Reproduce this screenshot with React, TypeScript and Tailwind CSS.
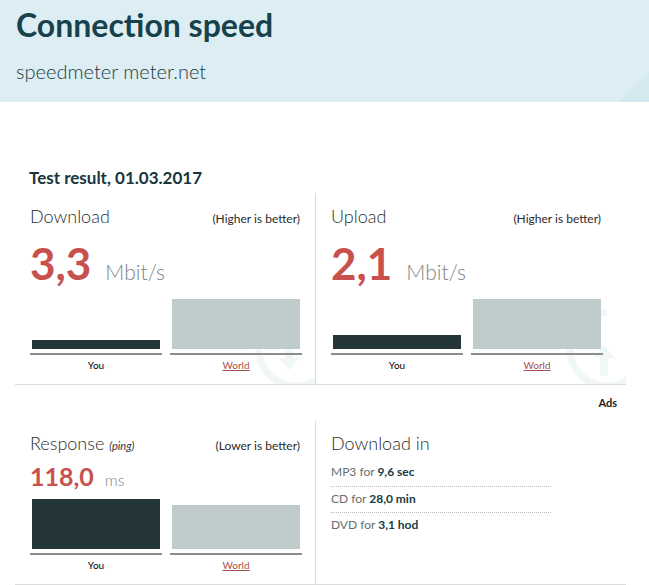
import React from 'react'

const FONT = { fontFamily: 'Lato, "Noto Sans", sans-serif' }

type BarsProps = { you: number; world: number }

// two bars over a grey base line, heights are 0..50 px
function Bars({ you, world }: BarsProps) {
  return (
    <div className="grid grid-cols-[132px_132px] gap-x-[8px]">
      <div>
        <div className="flex h-[50px] items-end px-[2px]">
          <div className="w-full bg-[#243538]" style={{ height: you }} />
        </div>
        <div className="mt-[4px] h-[2px] bg-[#8c8c8c]" />
        <div className="mt-[3px] text-center text-[10px] leading-[14px] text-black">You</div>
      </div>
      <div>
        <div className="flex h-[50px] items-end px-[2px]">
          <div className="w-full bg-[#c0cbcb]" style={{ height: world }} />
        </div>
        <div className="mt-[4px] h-[2px] bg-[#8c8c8c]" />
        <div className="mt-[3px] text-center text-[10px] leading-[14px] text-[#a4504d] underline">World</div>
      </div>
    </div>
  )
}

function Watermark({ up }: { up?: boolean }) {
  return (
    <svg className="pointer-events-none absolute bottom-[-10px] right-[-26px]" width="90" height="90" viewBox="0 0 90 90">
      <path d="M45 8 A37 37 0 1 0 82 45" fill="none" stroke="#f1f6f7" strokeWidth="7" />
      {up ? (
        <path d="M38 72 L38 54 L31 54 L42 41 L53 54 L46 54 L46 72 Z" fill="#f1f6f7" />
      ) : (
        <path d="M34 40 L42 40 L42 54 L49 54 L38 66 L27 54 L34 54 Z" fill="#f1f6f7" />
      )}
    </svg>
  )
}

function SpeedCell({ title, note, value, unit, you, world, up, last }: {
  title: string; note: string; value: string; unit: string; you: number; world: number; up?: boolean; last?: boolean
}) {
  return (
    <div className={'relative overflow-hidden pl-[15px] pt-[11px] pb-[12px] ' + (last ? 'flex-1' : 'w-[301px] border-r border-[#dcdcdc]')}>
      <Watermark up={up} />
      <div className="relative w-[272px]">
        <div className="flex items-baseline justify-between pr-[2px]">
          <span className="text-[18px] font-light leading-[24px] text-[#1f2e31]">{title}</span>
          <span className="text-[12px] leading-[18px] text-[#2a2a2a]">{note}</span>
        </div>
        <div className="mt-[11px] flex items-baseline">
          <span className="text-[44px] font-bold leading-[48px] text-[#c8504d]">{value}</span>
          <span className="ml-[14px] text-[21px] font-light leading-[24px] text-[#7b8686]">{unit}</span>
        </div>
        <div className="mt-[12px]">
          <Bars you={you} world={world} />
        </div>
      </div>
    </div>
  )
}

export default function App() {
  return (
    <div className="min-h-[585px] w-full bg-white" style={FONT}>
      {/* header */}
      <div className="relative h-[102px] overflow-hidden bg-[#dceef3] px-[16px] pt-[7px]">
        <div className="absolute bottom-0 right-0 h-[30px] w-[31px] bg-[#d5eaf0] [clip-path:polygon(100%_0,100%_100%,0_100%)]" />
        <h1 className="text-[32px] font-bold leading-[36px] text-[#17424c]">Connection speed</h1>
        <p className="mt-[16px] text-[20px] font-light leading-[24px] text-[#1d3b41]">speedmeter meter.net</p>
      </div>

      <div className="ml-[15px] w-[611px] pt-[65px]">
        <h2 className="pl-[14px] text-[17px] font-bold leading-[22px] text-[#18353b]">Test result, 01.03.2017</h2>

        <div className="mt-[4px] flex border-b border-[#dcdcdc]">
          <SpeedCell title="Download" note="(Higher is better)" value="3,3" unit="Mbit/s" you={9} world={50} />
          <SpeedCell title="Upload" note="(Higher is better)" value="2,1" unit="Mbit/s" you={14} world={50} up last />
        </div>

        <div className="mt-[10px] pr-[9px] text-right text-[11px] font-bold leading-[16px] text-[#222]">Ads</div>

        <div className="mt-[10px] flex border-b border-[#dcdcdc]">
          <div className="w-[301px] border-r border-[#dcdcdc] pl-[15px] pt-[10px] pb-[12px]">
            <div className="w-[272px]">
              <div className="flex items-baseline justify-between pr-[2px]">
                <span className="text-[18px] font-light leading-[24px] text-[#1f2e31]">
                  Response <i className="text-[11px] font-normal leading-none text-[#333]">(ping)</i>
                </span>
                <span className="text-[12px] leading-[18px] text-[#2a2a2a]">(Lower is better)</span>
              </div>
              <div className="mt-[6px] flex items-baseline">
                <span className="text-[25px] font-bold leading-[30px] text-[#c8504d]">118,0</span>
                <span className="ml-[11px] text-[16px] font-light leading-[20px] text-[#7b8686]">ms</span>
              </div>
              <div className="mt-[8px]">
                <Bars you={50} world={44} />
              </div>
            </div>
          </div>

          <div className="flex-1 pl-[15px] pt-[10px]">
            <div className="text-[18px] font-light leading-[24px] text-[#1f2e31]">Download in</div>
            <div className="mt-[5px] w-[220px] text-[12px] leading-[18px]">
              <div className="border-b border-dotted border-[#bdbdbd] pt-[3px] pb-[5px] text-[#667070]">
                MP3 for <b className="text-[#173c44]">9,6 sec</b>
              </div>
              <div className="border-b border-dotted border-[#bdbdbd] pt-[3px] pb-[4px] text-[#667070]">
                CD for <b className="text-[#173c44]">28,0 min</b>
              </div>
              <div className="pt-[3px] pb-[5px] text-[#667070]">
                DVD for <b className="text-[#173c44]">3,1 hod</b>
              </div>
            </div>
          </div>
        </div>
      </div>
    </div>
  )
}
